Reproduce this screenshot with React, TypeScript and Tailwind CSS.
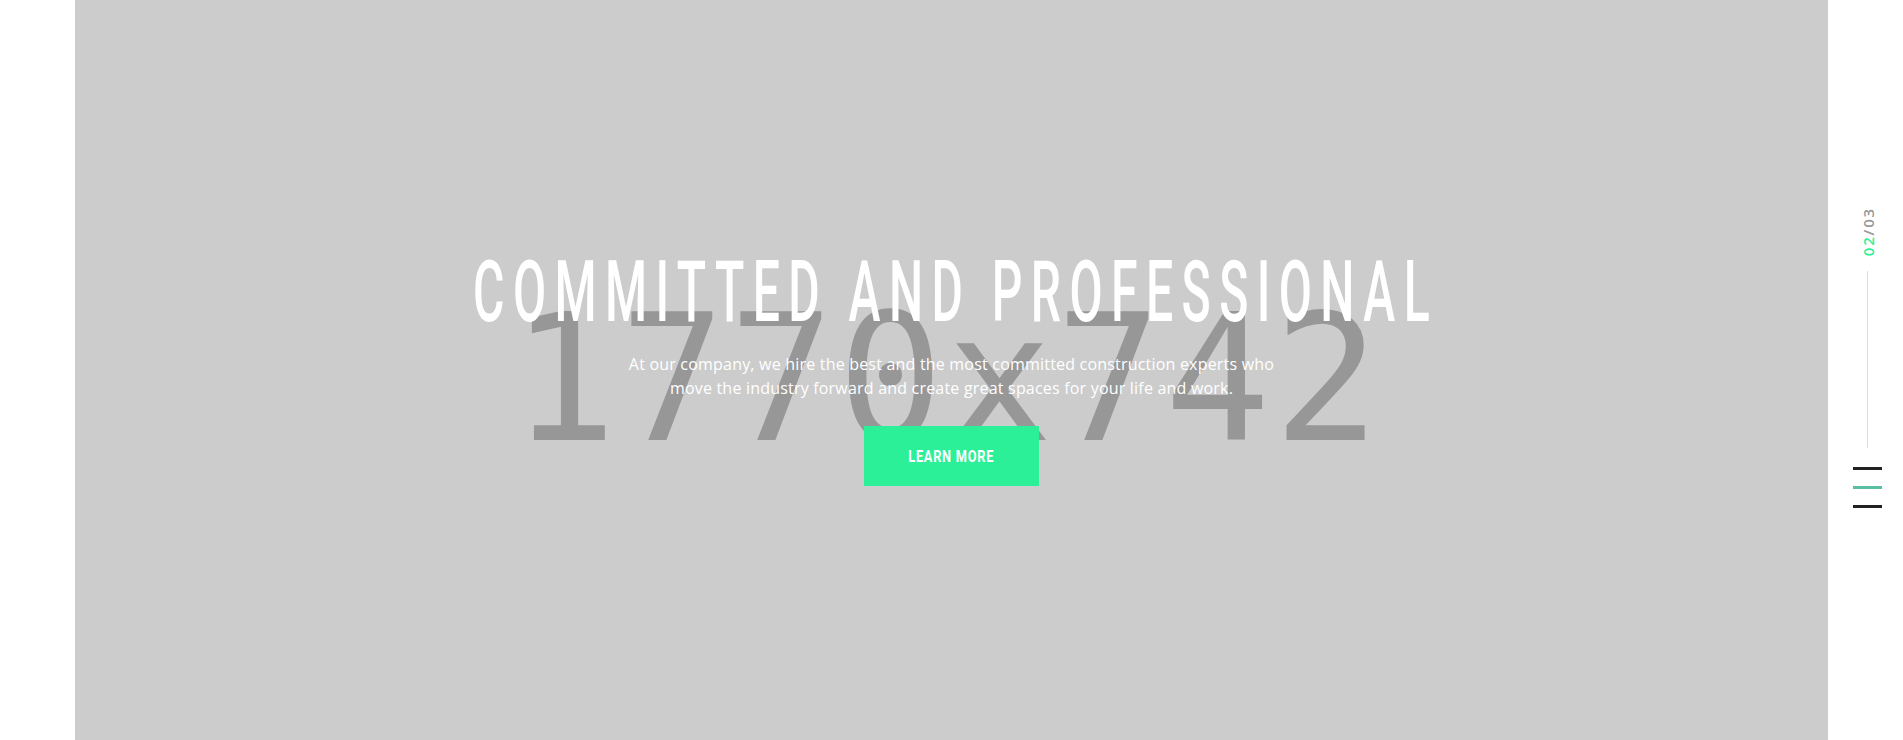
import React from 'react';

function Counter() {
    return (
        <span className="rotate-180 font-['Open_Sans',sans-serif] text-[15px] font-semibold leading-[16px] tracking-[1.8px] [writing-mode:vertical-rl]">
            <span className="text-[#2cf098]">02</span>
            <span className="text-[#999999]">/03</span>
        </span>
    );
}

function Burger() {
    return (
        <button type="button" className="flex flex-col gap-[16px]" aria-label="Menu">
            <span className="block h-[3px] w-[29px] bg-[#222222]" />
            <span className="block h-[3px] w-[29px] bg-[#5bbfa6]" />
            <span className="block h-[3px] w-[29px] bg-[#222222]" />
        </button>
    );
}

export default function App() {
    return (
        <div className="flex h-[740px] w-full overflow-hidden bg-white">
            {/* left gutter */}
            <div className="w-[75px] shrink-0" />

            {/* slide */}
            <main className="relative flex flex-1 flex-col items-center overflow-hidden bg-[#cccccc]">
                {/* placeholder image text */}
                <div className="pointer-events-none absolute inset-x-0 top-[292px] pr-[10px] text-center font-['DejaVu_Sans_Mono',monospace] text-[176px] leading-none tracking-[3px] text-[#979797]">
                    1770x742
                </div>

                <div className="relative flex flex-col items-center pt-[249px]">
                    <h1 className="inline-block scale-x-[0.56] whitespace-nowrap pl-[14px] font-['Roboto',sans-serif] text-[86px] font-medium uppercase leading-none tracking-[15px] text-white">
                        Committed and Professional
                    </h1>
                    <p className="mt-[17px] text-center font-['Open_Sans',sans-serif] text-[16px] font-medium leading-[24px] tracking-[0.2px] text-white">
                        At our company, we hire the best and the most committed construction experts who
                        <br />
                        move the industry forward and create great spaces for your life and work.
                    </p>
                    <a
                        href="#"
                        className="mt-[26px] flex h-[60px] w-[175px] items-center justify-center bg-[#2cf098]"
                    >
                        <span className="inline-block scale-x-75 font-['Roboto',sans-serif] text-[17px] font-bold uppercase leading-none tracking-[1px] text-white">
                            Learn more
                        </span>
                    </a>
                </div>
            </main>

            {/* right rail */}
            <aside className="w-[75px] shrink-0">
                <div className="ml-[25px] flex w-[29px] flex-col items-center pt-[207px]">
                    <Counter />
                    <span className="mt-[15px] block h-[177px] w-px bg-[#dddddd]" />
                    <div className="mt-[19px]">
                        <Burger />
                    </div>
                </div>
            </aside>
        </div>
    );
}
